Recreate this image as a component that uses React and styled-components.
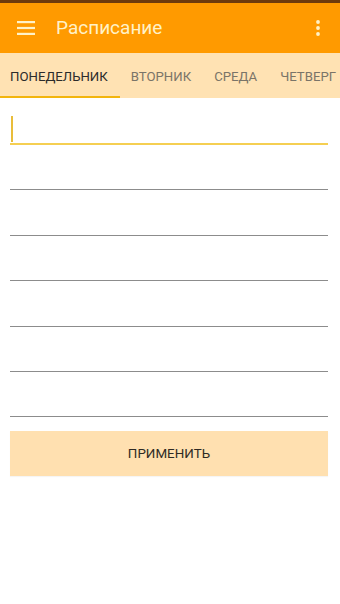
import React from 'react';
import styled, { createGlobalStyle } from 'styled-components';

const GlobalStyle = createGlobalStyle`
  html, body {
    margin: 0;
    padding: 0;
    background: #ffffff;
    font-family: Roboto, "Noto Sans", sans-serif;
  }
`;

// page
const Screen = styled.div`
  width: 340px;
  height: 604px;
  display: flex;
  flex-direction: column;
  background: #ffffff;
  overflow: hidden;
`;

const StatusStrip = styled.div`
  height: 3px;
  background: #6e3a0c;
`;

// app bar
const AppBar = styled.div`
  height: 50px;
  display: flex;
  align-items: center;
  padding: 0 12px 0 16px;
  background: #ff9a00;
`;

const IconButton = styled.div`
  width: 20px;
  height: 20px;
  display: flex;
  align-items: center;
  justify-content: center;
  flex-shrink: 0;
`;

const Title = styled.div`
  flex: 1;
  margin-left: 20px;
  margin-bottom: 1px;
  font-size: 19px;
  color: #fff2c8;
`;

// tabs
const TabBar = styled.div`
  height: 45px;
  display: flex;
  background: #ffe2b3;
  overflow: hidden;
`;

const Tab = styled.div`
  position: relative;
  flex-shrink: 0;
  display: flex;
  align-items: center;
  padding: 2px 12px 0 11px;
  font-size: 13.2px;
  color: ${(props) => (props.active ? '#2b2b2b' : '#7a7468')};
  &:first-child {
    padding-left: 10px;
  }
  &::after {
    content: '';
    display: ${(props) => (props.active ? 'block' : 'none')};
    position: absolute;
    left: 0;
    right: 0;
    bottom: 0;
    height: 2px;
    background: #f2b50f;
  }
`;

// form
const Form = styled.div`
  display: flex;
  flex-direction: column;
  padding: 2px 12px 0 10px;
`;

const Field = styled.div`
  height: 45px;
  display: flex;
  align-items: flex-end;
  border-bottom: ${(props) => (props.focused ? '2px solid #f5cf52' : '1px solid #8c8c8c')};
  box-sizing: border-box;
  margin-top: ${(props) => (props.first ? '0' : '0.4px')};
`;

const Caret = styled.div`
  width: 2px;
  height: 26px;
  margin: 0 0 1px 1px;
  background: #e9bd3a;
`;

const ApplyButton = styled.div`
  height: 45px;
  margin-top: 14px;
  display: flex;
  align-items: center;
  justify-content: center;
  background: #ffe0b0;
  font-size: 13.4px;
  color: #2e2a24;
  box-shadow: 0 1px 1px rgba(0, 0, 0, 0.04);
`;

const Menu = () => (
  <svg width="18" height="14" viewBox="0 0 18 14">
    <rect x="0" y="0" width="18" height="2.2" fill="#fff2c8" />
    <rect x="0" y="5.9" width="18" height="2.2" fill="#fff2c8" />
    <rect x="0" y="11.8" width="18" height="2.2" fill="#fff2c8" />
  </svg>
);

const MoreDots = () => (
  <svg width="4" height="16" viewBox="0 0 4 16">
    <circle cx="2" cy="2" r="1.9" fill="#fff2c8" />
    <circle cx="2" cy="8" r="1.9" fill="#fff2c8" />
    <circle cx="2" cy="14" r="1.9" fill="#fff2c8" />
  </svg>
);

const days = ['ПОНЕДЕЛЬНИК', 'ВТОРНИК', 'СРЕДА', 'ЧЕТВЕРГ'];

const App = () => (
  <Screen>
    <GlobalStyle />
    <StatusStrip />
    <AppBar>
      <IconButton>
        <Menu />
      </IconButton>
      <Title>Расписание</Title>
      <IconButton>
        <MoreDots />
      </IconButton>
    </AppBar>
    <TabBar>
      {days.map((day, i) => (
        <Tab key={day} active={i === 0}>{day}</Tab>
      ))}
    </TabBar>
    <Form>
      <Field focused first>
        <Caret />
      </Field>
      {[1, 2, 3, 4, 5, 6].map((n) => (
        <Field key={n} />
      ))}
      <ApplyButton>ПРИМЕНИТЬ</ApplyButton>
    </Form>
  </Screen>
);

export default App;
